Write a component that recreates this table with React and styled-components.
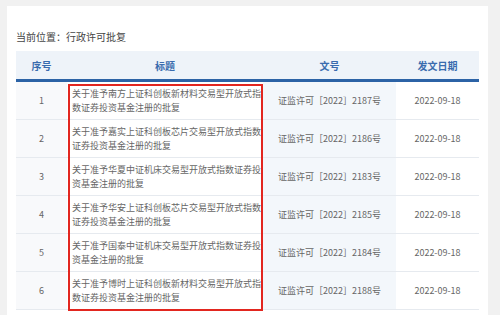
import styled, { createGlobalStyle } from "styled-components";

const GlobalStyle = createGlobalStyle`
  html, body {
    margin: 0;
    padding: 0;
    background: #f1f1f1;
  }
  body {
    font-family: "Noto Sans CJK SC", "Noto Sans", sans-serif;
  }
`;

const Page = styled.div`
  padding: 6px 12px 0 7px;
  height: 315px;
  box-sizing: border-box;
  overflow: hidden;
`;

const Panel = styled.div`
  width: 481px;
  height: 320px;
  background: #fff;
  padding: 25px 9px 0 9px;
  box-sizing: border-box;
`;

const Crumb = styled.div`
  font-size: 10px;
  line-height: 12px;
  color: #444;
  margin-bottom: 8px;
`;

const Table = styled.div`
  position: relative;
  width: 463px;
`;

const Row = styled.div`
  display: grid;
  grid-template-columns: 51px 196px 133px 83px;
  height: ${(p) => (p.$head ? "31px" : "38px")};
  box-sizing: border-box;
  border-bottom: ${(p) => (p.$head ? "3px solid #2c63a6" : "1px solid #e6eaef")};
  background: ${(p) => (p.$head ? "#eef3f9" : "transparent")};
`;

const Cell = styled.div`
  display: flex;
  align-items: center;
  justify-content: ${(p) => (p.$left ? "flex-start" : "center")};
  padding: ${(p) => (p.$left ? "0 2px 0 5px" : "0")};
  background: ${(p) => p.$bg || "transparent"};
  font-size: 9px;
  line-height: 14px;
  color: #666;
`;

const HeadCell = styled.div`
  display: flex;
  align-items: center;
  justify-content: center;
  font-size: 10px;
  font-weight: 700;
  color: #3a6cae;
`;

const Title = styled.div`
  width: 190px;
`;

const Highlight = styled.div`
  position: absolute;
  left: 52px;
  top: 33px;
  width: 195px;
  height: 227px;
  border: 2px solid #e2261f;
  box-sizing: border-box;
  pointer-events: none;
`;

const rows = [
  ["关于准予南方上证科创板新材料交易型开放式指数证券投资基金注册的批复", "2187"],
  ["关于准予嘉实上证科创板芯片交易型开放式指数证券投资基金注册的批复", "2186"],
  ["关于准予华夏中证机床交易型开放式指数证券投资基金注册的批复", "2183"],
  ["关于准予华安上证科创板芯片交易型开放式指数证券投资基金注册的批复", "2185"],
  ["关于准予国泰中证机床交易型开放式指数证券投资基金注册的批复", "2184"],
  ["关于准予博时上证科创板新材料交易型开放式指数证券投资基金注册的批复", "2188"],
];

export default function App() {
  return (
    <Page>
      <GlobalStyle />
      <Panel>
        <Crumb>当前位置：行政许可批复</Crumb>
        <Table>
          <Row $head>
            <HeadCell>序号</HeadCell>
            <HeadCell>标题</HeadCell>
            <HeadCell>文号</HeadCell>
            <HeadCell>发文日期</HeadCell>
          </Row>
          {rows.map(([title, num], i) => (
            <Row key={num}>
              <Cell $bg="#f8f9fb">{i + 1}</Cell>
              <Cell $left>
                <Title>{title}</Title>
              </Cell>
              <Cell $bg="#f3f7fb">证监许可［2022］{num}号</Cell>
              <Cell>2022-09-18</Cell>
            </Row>
          ))}
          <Highlight />
        </Table>
      </Panel>
    </Page>
  );
}
